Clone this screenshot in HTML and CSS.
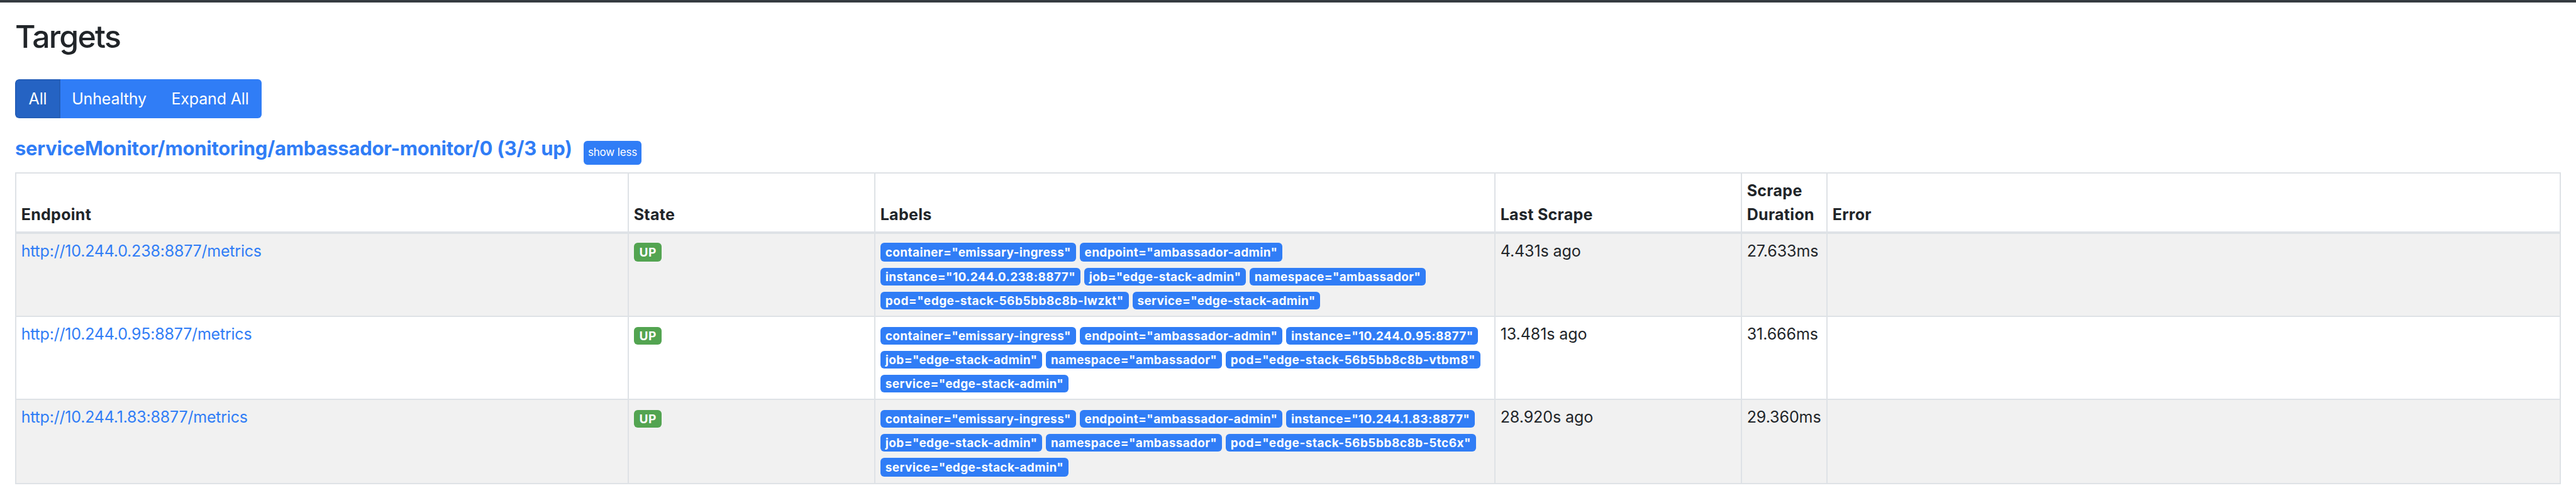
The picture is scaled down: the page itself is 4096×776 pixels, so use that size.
FILE: index.html
```
<!DOCTYPE html>
<html lang="en">
<head>
<meta charset="utf-8">
<title>Targets</title>
<link rel="stylesheet" href="styles.css">
</head>
<body>
<div class="navbar"></div>
<main class="container">
  <h2 class="title">Targets</h2>
  <div class="btn-group">
    <button class="btn btn-all active">All</button>
    <button class="btn btn-unhealthy">Unhealthy</button>
    <button class="btn btn-expand">Expand All</button>
  </div>
  <div class="pool">
    <a class="pool-name">serviceMonitor/monitoring/ambassador-monitor/0 (3/3 up)</a>
    <button class="btn-xs"><span>show less</span></button>
  </div>
  <table class="targets">
    <colgroup><col class="c-endpoint"><col class="c-state"><col class="c-labels"><col class="c-last"><col class="c-duration"><col class="c-error"></colgroup>
    <thead>
      <tr><th>Endpoint</th><th>State</th><th>Labels</th><th>Last Scrape</th><th>Scrape<br>Duration</th><th>Error</th></tr>
    </thead>
    <tbody>
      <tr>
        <td><a>http://10.244.0.238:8877/metrics</a></td>
        <td class="badges"><div class="line"><span class="badge up">UP</span></div></td>
        <td class="badges">
          <div class="line"><span class="badge">container="emissary-ingress"</span><span class="badge">endpoint="ambassador-admin"</span></div>
          <div class="line"><span class="badge">instance="10.244.0.238:8877"</span><span class="badge">job="edge-stack-admin"</span><span class="badge ns">namespace="ambassador"</span></div>
          <div class="line"><span class="badge pod">pod="edge-stack-56b5bb8c8b-lwzkt"</span><span class="badge">service="edge-stack-admin"</span></div>
        </td>
        <td>4.431s ago</td><td>27.633ms</td><td></td>
      </tr>
      <tr>
        <td><a>http://10.244.0.95:8877/metrics</a></td>
        <td class="badges"><div class="line"><span class="badge up">UP</span></div></td>
        <td class="badges">
          <div class="line"><span class="badge">container="emissary-ingress"</span><span class="badge">endpoint="ambassador-admin"</span><span class="badge">instance="10.244.0.95:8877"</span></div>
          <div class="line"><span class="badge">job="edge-stack-admin"</span><span class="badge ns">namespace="ambassador"</span><span class="badge pod">pod="edge-stack-56b5bb8c8b-vtbm8"</span></div>
          <div class="line"><span class="badge">service="edge-stack-admin"</span></div>
        </td>
        <td>13.481s ago</td><td>31.666ms</td><td></td>
      </tr>
      <tr>
        <td><a>http://10.244.1.83:8877/metrics</a></td>
        <td class="badges"><div class="line"><span class="badge up">UP</span></div></td>
        <td class="badges">
          <div class="line"><span class="badge">container="emissary-ingress"</span><span class="badge">endpoint="ambassador-admin"</span><span class="badge">instance="10.244.1.83:8877"</span></div>
          <div class="line"><span class="badge">job="edge-stack-admin"</span><span class="badge ns">namespace="ambassador"</span><span class="badge pod">pod="edge-stack-56b5bb8c8b-5tc6x"</span></div>
          <div class="line"><span class="badge">service="edge-stack-admin"</span></div>
        </td>
        <td>28.920s ago</td><td>29.360ms</td><td></td>
      </tr>
    </tbody>
  </table>
</main>
</body>
</html>
```

FILE: styles.css
```
* { box-sizing: border-box; }
body {
  margin: 0;
  background: #fff;
  color: #212529;
  font: 400 25px/38.4px Inter, "Liberation Sans", sans-serif;
  overflow: hidden;
}
.navbar { height: 4px; background: #353b40; }
.container { padding: 0 24px; }
.title {
  margin: 0;
  padding-top: 24px;
  height: 122px;
  font-size: 50px;
  line-height: 60px;
  font-weight: 500;
  letter-spacing: -1.8px;
}
button {
  border: 0;
  padding: 0;
  color: #fff;
  background: #307df6;
  font: inherit;
  white-space: nowrap;
}
.btn-group { display: flex; width: 392px; height: 62px; border-radius: 6px; overflow: hidden; }
.btn { letter-spacing: -0.15px; }
.btn-all { width: 72px; }
.btn-unhealthy { width: 155px; }
.btn-expand { width: 165px; padding-left: 1px; }
.btn.active { background: #2563c3; border: 2px solid #235db7; border-radius: 6px 0 0 6px; }

.pool { display: flex; align-items: flex-start; height: 86px; padding-top: 29px; }
.pool-name { width: 904px; white-space: nowrap; font-size: 31px; font-weight: 700; color: #307df6; letter-spacing: -0.24px; }
.btn-xs {
  display: flex;
  justify-content: center;
  width: 92px;
  height: 38px;
  margin-top: 7px;
  border-radius: 6px;
  font-size: 17px;
  line-height: 36px;
  letter-spacing: -0.15px;
}

.targets { width: 4048px; table-layout: fixed; border-collapse: separate; border-spacing: 0; border-right: 2px solid #dee2e6; }
.c-endpoint { width: 974px; }
.c-state { width: 392px; }
.c-labels { width: 986px; }
.c-last { width: 392px; }
.c-duration { width: 136px; }
th, td { padding: 7.68px 0 0 7.7px; border-left: 2px solid #dee2e6; text-align: left; vertical-align: top; white-space: nowrap; }
th {
  height: 98px;
  padding-bottom: 7.68px;
  vertical-align: bottom;
  border-top: 2px solid #dee2e6;
  border-bottom: 4px solid #dee2e6;
  font-weight: 700;
  letter-spacing: 0.3px;
}
td { height: 132px; border-bottom: 2px solid #dee2e6; letter-spacing: -0.08px; }
td a { color: #307df6; letter-spacing: -0.21px; }
tbody tr:nth-child(odd) td { background: #f1f1f1; }
tbody tr:last-child td { height: 134px; }

td.badges { padding: 16px 0 0 8px; }
.line { display: flex; gap: 6px; height: 28px; margin-bottom: 10px; }
.line:last-child { margin-bottom: 0; }
tr:first-child .badges { padding-top: 14px; }
tr:first-child .line:first-child { height: 30px; }
tr:last-child .line:nth-child(3) { height: 30px; }
.badge {
  display: flex;
  align-items: center;
  padding: 0 7.8px;
  border-radius: 6px;
  background: #307df6;
  color: #fff;
  font-size: 19px;
  font-weight: 700;
  line-height: 1;
  letter-spacing: 0.37px;
}
.ns { letter-spacing: 0.33px; }
.pod { letter-spacing: 0.49px; }
.up { background: #53a451; padding: 0 8.4px; letter-spacing: 0.6px; }
```
